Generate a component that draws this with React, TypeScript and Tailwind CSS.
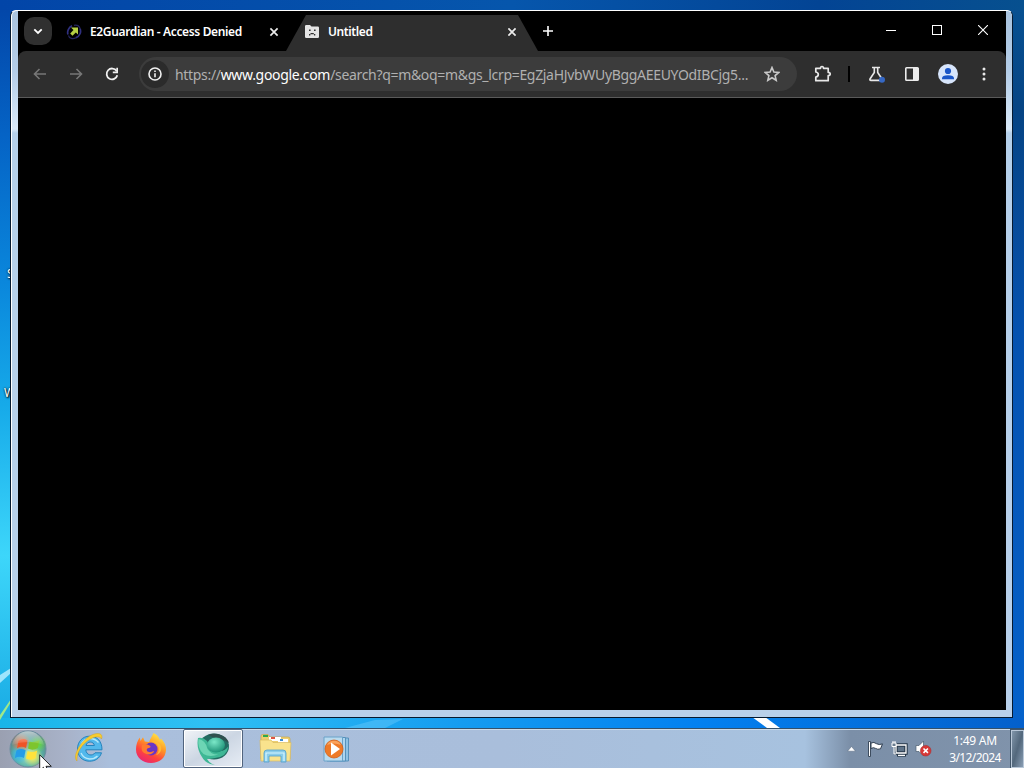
import type { ReactNode } from 'react';

const ToolbarButton = ({ children }: { children: ReactNode }) => (
  <button className="flex h-9 w-9 shrink-0 items-center justify-center">
    {children}
  </button>
);

const CloseIcon = () => (
  <svg width="10" height="10" viewBox="0 0 10 10" className="shrink-0">
    <path d="M1.4 1.4 8.6 8.6M8.6 1.4 1.4 8.6" stroke="#ececec" strokeWidth="1.7" />
  </svg>
);

const TabStrip = () => (
  <div className="flex h-10 shrink-0 items-stretch bg-black text-white">
    <button className="mt-[6px] ml-[6px] flex h-7 w-7 items-center justify-center rounded-[10px] bg-[#303030]">
      <svg width="10" height="7" viewBox="0 0 10 7">
        <path d="M1.3 1.3 5 5 8.7 1.3" fill="none" stroke="#fff" strokeWidth="1.8" />
      </svg>
    </button>

    <div className="flex w-[234px] items-center pt-px pl-[14px]">
      <svg width="16" height="16" viewBox="0 0 16 16" className="shrink-0">
        <path d="M2 10.5C.8 7 3 3.200 6 1.800M14 4.500C15.500 8 14 12 10 13.600" fill="none" stroke="#303080" strokeWidth="1.700" />
        <path d="M2.500 11.500C3 14.500 7 15.500 10 13.600M8 1.300C11 .4 13.500 2 14 4.500" fill="none" stroke="#25255e" strokeWidth="1.300" />
        <path d="M5 3.500h7v7l-2.200-2-3.300 3.300-2.300-2.300L7.500 6z" fill="#b5cf45" />
      </svg>
      <span className="ml-2 w-[179px] text-[12px] font-semibold tracking-[-0.35px] whitespace-nowrap">
        E2Guardian - Access Denied
      </span>
      <CloseIcon />
    </div>

    <div className="mt-1 flex h-9 w-[252px] items-center bg-[#2e2e2e] pb-[3px] pl-[19px] [clip-path:polygon(20px_0,232px_0,252px_100%,0_100%)]">
      <svg width="14" height="13" viewBox="0 0 14 13" className="shrink-0">
        <path d="M1.200 0H5l1.500 1.500h6.300q1.200 0 1.200 1.200v9q0 1.300-1.300 1.300H1.300Q0 13 0 11.700V1.200Q0 0 1.200 0z" fill="#e4e4e4" />
        <path d="M4 4.500h1.600v1.600H4zM9 4.500h1.600v1.600H9zM4 10.500V9h1.500V8h3.300v1h1.500v1.500H9V9.300H5.300v1.200z" fill="#303030" />
      </svg>
      <span className="mt-px ml-[9px] w-[179px] text-[12px] font-semibold tracking-[-0.4px]">
        Untitled
      </span>
      <CloseIcon />
    </div>

    <button className="flex w-5 items-center justify-center">
      <svg width="12" height="12" viewBox="0 0 12 12">
        <path d="M6 1v10M1 6h10" stroke="#fff" strokeWidth="1.600" />
      </svg>
    </button>

    <div className="ml-auto flex h-[38px]">
      <button className="flex w-[46px] items-center justify-center">
        <span className="h-px w-[10px] bg-white" />
      </button>
      <button className="flex w-[46px] items-center justify-center">
        <span className="h-[10px] w-[10px] border border-white" />
      </button>
      <button className="flex w-[46px] items-center justify-center">
        <svg width="10" height="10" viewBox="0 0 10 10">
          <path d="M0 0l10 10M10 0 0 10" stroke="#fff" strokeWidth="1.100" />
        </svg>
      </button>
    </div>
  </div>
);

const AddressBar = () => (
  <div className="flex h-[34px] w-[658px] shrink-0 items-center rounded-full bg-[#3c3c3c] pl-[2px]">
    <span className="flex h-[28px] w-[28px] items-center justify-center rounded-full bg-[#2b2b2b]">
      <svg width="14" height="14" viewBox="0 0 14 14">
        <circle cx="7" cy="7" r="6" fill="none" stroke="#f0f0f0" strokeWidth="1.600" />
        <path d="M7 6.200v4M7 3.500v1.500" stroke="#f0f0f0" strokeWidth="1.600" />
      </svg>
    </span>
    <span className="ml-[6px] w-[589px] text-[14px] tracking-[-0.32px] whitespace-nowrap text-[#b0b0b0]">
      https://<span className="text-white">www.google.com</span>
      /search?q=m&amp;oq=m&amp;gs_lcrp=EgZjaHJvbWUyBggAEEUYOdIBCjg5...
    </span>
    <svg width="16" height="16" viewBox="0 0 16 16">
      <path d="M8 1.500 9.900 6l4.900.4-3.700 3.200 1.100 4.700L8 11.800l-4.200 2.500 1.100-4.700L1.200 6.400 6.100 6z" fill="none" stroke="#c9c9c9" strokeWidth="1.600" />
    </svg>
  </div>
);

const Toolbar = () => (
  <div className="bg-black">
    <div className="flex h-[47px] items-center rounded-t-lg border-b border-[#5a5a5a] bg-[#2e2e2e] pl-1">
      <ToolbarButton>
        <svg width="14" height="12" viewBox="0 0 14 12">
          <path d="M13 6H1.500M6.500 1l-5 5 5 5" fill="none" stroke="#777" strokeWidth="1.600" />
        </svg>
      </ToolbarButton>
      <ToolbarButton>
        <svg width="14" height="12" viewBox="0 0 14 12">
          <path d="M1 6h11.500M7.500 1l5 5-5 5" fill="none" stroke="#777" strokeWidth="1.600" />
        </svg>
      </ToolbarButton>
      <ToolbarButton>
        <svg width="14" height="14" viewBox="0 0 14 14">
          <path d="M11.600 4A5.400 5.400 0 1 0 12.300 8.200" fill="none" stroke="#f0f0f0" strokeWidth="1.800" />
          <path d="M13 .8v5.400H7.800V4.600h3.500V.8z" fill="#f0f0f0" />
        </svg>
      </ToolbarButton>
      <div className="w-[9px] shrink-0" />
      <AddressBar />
      <div className="w-2 shrink-0" />
      <ToolbarButton>
        <svg width="18" height="18" viewBox="0 0 18 18">
          <path d="M1.800 3.300H6.500Q6.500 1.500 8 1.500T9.500 3.300H14.200V7.400Q16.200 7.500 16.200 9T14.200 10.700V15.700H1.800V12Q4.300 11.500 4.300 9.500T1.800 7z" fill="none" stroke="#e8e8e8" strokeWidth="1.700" strokeLinejoin="round" />
        </svg>
      </ToolbarButton>
      <div className="mr-2 ml-[7px] h-4 w-[2px] bg-black" />
      <ToolbarButton>
        <svg width="18" height="18" viewBox="0 0 18 18">
          <path d="M5 2.500h8M7.300 2.500v5L3 14q-.6 1.400 1 1.400h10q1.600 0 1-1.400L10.700 7.500v-5" fill="none" stroke="#e8e8e8" strokeWidth="1.600" />
          <circle cx="15" cy="14.800" r="3" fill="#3668c4" />
        </svg>
      </ToolbarButton>
      <ToolbarButton>
        <svg width="14" height="14" viewBox="0 0 14 14">
          <rect x=".8" y=".8" width="12.400" height="12.400" rx=".8" fill="none" stroke="#ececec" strokeWidth="1.600" />
          <path d="M8 1h5.500v12H8z" fill="#ececec" />
        </svg>
      </ToolbarButton>
      <ToolbarButton>
        <svg width="20" height="20" viewBox="0 0 20 20">
          <circle cx="10" cy="10" r="10" fill="#d7e5fb" />
          <circle cx="10" cy="7" r="3.100" fill="#1a56c8" />
          <path d="M4 15.200v-1q0-3 6-3t6 3v1z" fill="#1a56c8" />
        </svg>
      </ToolbarButton>
      <ToolbarButton>
        <svg width="4" height="14" viewBox="0 0 4 14" fill="#e8e8e8">
          <circle cx="2" cy="2" r="1.500" />
          <circle cx="2" cy="7" r="1.500" />
          <circle cx="2" cy="12" r="1.500" />
        </svg>
      </ToolbarButton>
    </div>
  </div>
);

const BrowserWindow = () => (
  <div className="absolute top-[10px] left-[10px] h-[708px] w-[1003px] rounded-t-[6px] border border-t-white border-r-[#061a30] border-b-[#061a30] border-l-[#061a30] bg-white">
    <div className="ml-px h-[706px] w-[1000px] rounded-t-[5px] bg-[linear-gradient(to_bottom,#a9c3de_0,#b4cde8_60px,#d9e9f8_118px,#b5d0ea_122px,#b8d0ea_100%)] px-[6px] pb-[6px]">
      <div className="flex h-[699px] w-[988px] flex-col bg-black">
        <TabStrip />
        <Toolbar />
      </div>
    </div>
  </div>
);

const DesktopLabel = ({ text, className }: { text: string; className: string }) => (
  <span
    className={`absolute text-[12px] leading-4 text-white [text-shadow:1px_1px_2px_#000,0_0_2px_#000] ${className}`}
  >
    {text}
  </span>
);

const Wallpaper = () => (
  <svg width="1024" height="728" viewBox="0 0 1024 728" className="absolute top-0 left-0">
    <defs>
      <linearGradient id="left" x1="0" y1="0" x2="0" y2="1">
        <stop offset="0" stopColor="#0347a9" />
        <stop offset=".18" stopColor="#0564c6" />
        <stop offset=".38" stopColor="#0a87dc" />
        <stop offset=".55" stopColor="#16aae9" />
        <stop offset=".76" stopColor="#3dd6fa" />
        <stop offset="1" stopColor="#18a9e3" />
      </linearGradient>
      <linearGradient id="right" x1="0" y1="0" x2="0" y2="1">
        <stop offset="0" stopColor="#075091" />
        <stop offset=".14" stopColor="#064484" />
        <stop offset=".45" stopColor="#0552b0" />
        <stop offset="1" stopColor="#0562cb" />
      </linearGradient>
      <linearGradient id="top">
        <stop offset="0" stopColor="#0245a8" />
        <stop offset=".5" stopColor="#0656ac" />
        <stop offset=".8" stopColor="#034494" />
        <stop offset="1" stopColor="#07508f" />
      </linearGradient>
      <linearGradient id="bottom">
        <stop offset="0" stopColor="#18b5e9" />
        <stop offset=".2" stopColor="#2fc0f3" />
        <stop offset=".45" stopColor="#159cf0" />
        <stop offset=".68" stopColor="#0381f0" />
        <stop offset="1" stopColor="#0460cb" />
      </linearGradient>
    </defs>
    <rect width="1024" height="728" fill="url(#top)" />
    <rect y="10" width="11" height="718" fill="url(#left)" />
    <rect x="1012" y="10" width="12" height="718" fill="url(#right)" />
    <rect y="718" width="1024" height="10" fill="url(#bottom)" />
    <path d="M0 675 11 668v5L0 683z" fill="#b5edff" opacity=".85" />
    <path d="M0 715 11 699v3L0 720z" fill="#9fe88a" />
    <path d="M752 717h13l15 11h-13z" fill="#fff" />
    <path d="M345 728 375 720l28-1-18 9z" fill="#8fdcff" opacity=".3" />
  </svg>
);

const StartOrb = () => (
  <svg width="38" height="38" viewBox="0 0 38 38">
    <defs>
      <radialGradient id="orb" cx=".5" cy=".65" r=".6">
        <stop offset="0" stopColor="#a6e8d0" />
        <stop offset=".6" stopColor="#5cb3a8" />
        <stop offset="1" stopColor="#567f86" />
      </radialGradient>
      <radialGradient id="glowRed">
        <stop offset="0" stopColor="#ff6a3c" />
        <stop offset="1" stopColor="#ff6a3c" stopOpacity="0" />
      </radialGradient>
      <radialGradient id="glowGreen">
        <stop offset="0" stopColor="#66dd34" />
        <stop offset="1" stopColor="#66dd34" stopOpacity="0" />
      </radialGradient>
      <radialGradient id="glowBlue">
        <stop offset="0" stopColor="#2fb8f8" />
        <stop offset="1" stopColor="#2fb8f8" stopOpacity="0" />
      </radialGradient>
      <radialGradient id="glowYellow">
        <stop offset="0" stopColor="#fff050" />
        <stop offset="1" stopColor="#fff050" stopOpacity="0" />
      </radialGradient>
      <linearGradient id="orbShine" x1="0" y1="0" x2="0" y2="1">
        <stop offset="0" stopColor="#fff" stopOpacity=".6" />
        <stop offset="1" stopColor="#fff" stopOpacity=".05" />
      </linearGradient>
    </defs>
    <circle cx="19" cy="19" r="18" fill="url(#orb)" stroke="#6a8da0" />
    <circle cx="12" cy="13" r="10" fill="url(#glowRed)" />
    <circle cx="29" cy="14" r="9" fill="url(#glowGreen)" />
    <circle cx="10" cy="25" r="9" fill="url(#glowBlue)" />
    <circle cx="24" cy="27" r="10" fill="url(#glowYellow)" />
    <path d="M9.500 11Q14 7.500 18.500 10.500L17 18q-4.500-2.500-9 .3z" fill="#ef5327" />
    <path d="M20.500 11.200Q25 13.500 30.500 10L28.800 18q-5 3.200-9.800.6z" fill="#7dc52d" />
    <path d="M7.400 20.500q4.500-2.700 9.200-.3L15 28q-5-2.500-9.200.2z" fill="#259ce8" />
    <path d="M18.600 21q4.800 2.400 9.600-.5L26.500 28q-5 3-9.600.5z" fill="#ffe33c" />
    <path d="M3 15a16.200 16.200 0 0 1 32 0Q19 9 3 15z" fill="url(#orbShine)" />
  </svg>
);

const ExplorerIcon = () => (
  <svg width="32" height="32" viewBox="0 0 32 32">
    <path d="M16.500 4.200C24.600 4.200 29 9.500 29 17.800H12.800C13.200 23.500 19.500 24.500 22 20.800H28.500C26.500 27 21.500 29.200 16.500 29.200 9.500 29.200 4.500 24.500 4.500 17S9.700 4.200 16.500 4.200zM13 13.500h8.400C20.800 9 13.900 8.800 13 13.500z" fill="#52b8ec" stroke="#2583bd" strokeWidth="1" fillRule="evenodd" />
    <path d="M8 13q3-6.500 9-6.500 5 0 8.500 4M8 21q2.500 5.500 8.500 6 5 0 8-3" fill="none" stroke="#b7e8fb" strokeWidth="1.400" />
    <path d="M4 29C-1.500 24 9 6.500 20 2.500c5.500-2 10.500-1 8.500 4.500C27.300 4 22 4.200 17 7.300 9 12.200 3 21 4 29z" fill="#f8cd2e" stroke="#d5a31d" strokeWidth=".5" />
  </svg>
);

const FirefoxIcon = () => (
  <svg width="32" height="32" viewBox="0 0 32 32">
    <defs>
      <linearGradient id="fox" x1=".8" y1="0" x2=".25" y2="1">
        <stop offset="0" stopColor="#fff04b" />
        <stop offset=".4" stopColor="#ff9825" />
        <stop offset=".7" stopColor="#ff433d" />
        <stop offset="1" stopColor="#e72476" />
      </linearGradient>
    </defs>
    <path d="M18.500 1c4 2 5.500 4.500 6.500 7l1-1.500c3.500 3.500 5.200 7.200 5 11.500C30.600 26 24.500 31 16 31S1 25.500 1 17.500C1 12.500 2.500 8.500 4.800 5.500L5.500 9 8 5.200l1.800 4.300 4.400.5C15 6.500 17 5 18.500 1z" fill="url(#fox)" />
    <circle cx="16" cy="17" r="6.500" fill="#6b35c5" />
    <path d="M7 13q4-1.500 7 .3c3 1.600 1 2.600-1 3-2 .5-1.500 3.600 1.200 3.800 2 .2 3-.7 5-1.100-1 3-5.500 4.500-9 2.500C7 20.500 6 17 7 13z" fill="#ff7a2f" />
    <path d="M16 9.500c4.500 0 7.300 3 7.700 6.500.5 3.500-1 6-3 7 5.500-1 7.500-7.500 3.500-11.500-2-2-5-3.500-8.200-2z" fill="#ffb833" />
  </svg>
);

const SwirlIcon = () => (
  <svg width="34" height="34" viewBox="0 0 34 34">
    <defs>
      <radialGradient id="swirl" cx=".4" cy=".3" r=".7">
        <stop offset="0" stopColor="#7be8c8" />
        <stop offset="1" stopColor="#1f9378" />
      </radialGradient>
    </defs>
    <ellipse cx="18" cy="14.500" rx="15" ry="13" fill="#236b62" />
    <path d="M12 3c8-3.500 19 0 21 8-4-3-7-4-10-3z" fill="#30504f" />
    <path d="M2 6q5-1 9 3 3 8 11 10 7 1 10.500-5-1.500 11-13.500 12-5 1-8 1 2 4 8 6-9.500-1-13-8Q0 16 2 6z" fill="#3eb795" />
    <ellipse cx="20" cy="13" rx="9" ry="7.500" fill="url(#swirl)" />
    <path d="M2.500 7q7 1 9 10 4 6 11 5.500-9 3-15-.5Q1 16 2.500 7z" fill="#79dcbc" opacity=".8" />
  </svg>
);

const FolderIcon = () => (
  <svg width="34" height="32" viewBox="0 0 34 32">
    <path d="M3 3q0-1.500 1.500-1.500H10L12 4h18q2 0 2 2v20H3z" fill="#edcf70" stroke="#c9a747" strokeWidth=".7" />
    <path d="M5 2h5v2H5z" fill="#2eaa4a" />
    <path d="M11 4h12v4H11zM20 6h10v4H20z" fill="#fff" />
    <path d="M13 4h4v2h-4z" fill="#df5441" />
    <path d="M22 6h3v2h-3z" fill="#398bd5" />
    <path d="M2 7h11l2 2.500h18L32 28H3z" fill="#f9e38d" stroke="#d9ba61" strokeWidth=".7" />
    <path d="M6 29V20q0-3 3-3h16q3 0 3 3v9h-5v-6H11v6z" fill="#8bcdea" stroke="#529fcd" strokeWidth=".8" />
    <path d="M8 28v-8h18v8" fill="none" stroke="#d5f5ff" strokeWidth="1.200" />
  </svg>
);

const MediaPlayerIcon = () => (
  <svg width="30" height="28" viewBox="0 0 30 28">
    <path d="M8 3h18.500v23H8z" fill="#8ec2e4" stroke="#5791bb" />
    <path d="M5 2.500h18.500v23.500H5z" fill="#aed5ee" stroke="#5791bb" />
    <path d="M2 2h18.500v24H2z" fill="#b9dbef" stroke="#6aa2c9" />
    <circle cx="12" cy="14" r="9" fill="#ee7a27" stroke="#d45e16" strokeWidth=".8" />
    <path d="M5 10a8 8 0 0 1 14 0q-7-3-14 0z" fill="#ffb575" opacity=".7" />
    <path d="M9 7.500 18 14 9 20.500z" fill="#fff" />
  </svg>
);

const Tray = () => (
  <div className="flex h-full items-center">
    <svg width="9" height="6" viewBox="0 0 9 6">
      <path d="M4.500.5 8.500 5.200h-8z" fill="#fff" stroke="#53657a" strokeWidth=".5" />
    </svg>
    <svg width="17" height="16" viewBox="0 0 17 16" className="ml-[11px]">
      <path d="M1.500.5h2v15h-2z" fill="#fff" stroke="#2f3e50" strokeWidth=".9" />
      <path d="M4 2q3-1.500 5.500.7 2.500 1.500 6 .2l-2 5q-3 1-5-.5T4 7.500z" fill="#fff" stroke="#2f3e50" strokeWidth="1" />
    </svg>
    <svg width="17" height="16" viewBox="0 0 17 16" className="ml-[7px]">
      <path d="M5 4h10v8H5z" fill="#5f7388" stroke="#263748" strokeWidth="3.400" />
      <path d="M6 14.300h9" stroke="#263748" strokeWidth="2.600" />
      <path d="M5 4h10v8H5zM7 14.300h7" fill="none" stroke="#fff" strokeWidth="1.300" />
      <path d="M1 2h4v3.500H1zM3 5.500V13h2M2 0v2M4 0v2" fill="#687b8e" stroke="#fff" strokeWidth="1" />
    </svg>
    <svg width="18" height="17" viewBox="0 0 18 17" className="ml-[7px]">
      <path d="M1 5.500h3L8.500 1v15L4 11.500H1z" fill="#fff" stroke="#4c5e70" strokeWidth=".7" />
      <circle cx="10.700" cy="10.700" r="5.300" fill="#d73736" stroke="#a92d31" strokeWidth=".6" />
      <path d="m8.500 8.500 4.400 4.400m0-4.400-4.400 4.400" stroke="#fff" strokeWidth="1.600" />
    </svg>
    <div className="ml-[9px] flex w-[66px] flex-col text-center text-[12px] leading-[17px] tracking-[-0.6px] text-white">
      <span className="tracking-[-0.25px]">1:49 AM</span>
      <span>3/12/2024</span>
    </div>
    <div className="ml-[3px] h-[38px] w-[13px] border border-[#b9c8d8] bg-linear-to-br from-[#8196aa] via-[#53687c] to-[#8a9eb4] outline outline-[#42566a]" />
  </div>
);

const Taskbar = () => (
  <div className="relative flex h-10 items-center border-t border-[#34516b] bg-[linear-gradient(to_right,#9aa0b1_0,#a8b2c8_65px,#aabfdc_110px,#a9bedb_500px,#a7c2df_805px,#7b8fa8_850px,#8093ab_100%)] shadow-[inset_0_1px_0_#cbdbea]">
    <div className="ml-[9px] flex w-16">
      <StartOrb />
    </div>
    <div className="w-[62px] pb-0.5">
      <ExplorerIcon />
    </div>
    <div className="w-12 pb-0.5">
      <FirefoxIcon />
    </div>
    <div className="flex h-full w-[60px] items-center justify-center rounded-[2px] border border-[#51647e] bg-linear-to-br from-[#f1f4f8] via-[#ccd6e3] to-[#e7edf5] shadow-[inset_0_0_0_1px_#fff]">
      <SwirlIcon />
    </div>
    <div className="ml-[15px] w-[64px]">
      <FolderIcon />
    </div>
    <MediaPlayerIcon />
    <div className="ml-auto h-full">
      <Tray />
    </div>
    <svg width="13" height="20" viewBox="0 0 13 20" className="absolute top-[25px] left-[39px]">
      <path d="M.7.800v16l3.700-3.500 2.500 6 2.700-1.200L7 12.300h5.300z" fill="#fff" stroke="#111" strokeWidth=".9" />
    </svg>
  </div>
);

export default function App() {
  return (
    <div className="flex h-[768px] w-[1024px] flex-col overflow-hidden font-['Noto_Sans',sans-serif]">
      <div className="relative flex-1 overflow-hidden">
        <Wallpaper />
        <DesktopLabel text="S" className="top-[266px] left-[7px]" />
        <DesktopLabel text="W" className="top-[385px] left-[4px]" />
        <BrowserWindow />
      </div>
      <Taskbar />
    </div>
  );
}
